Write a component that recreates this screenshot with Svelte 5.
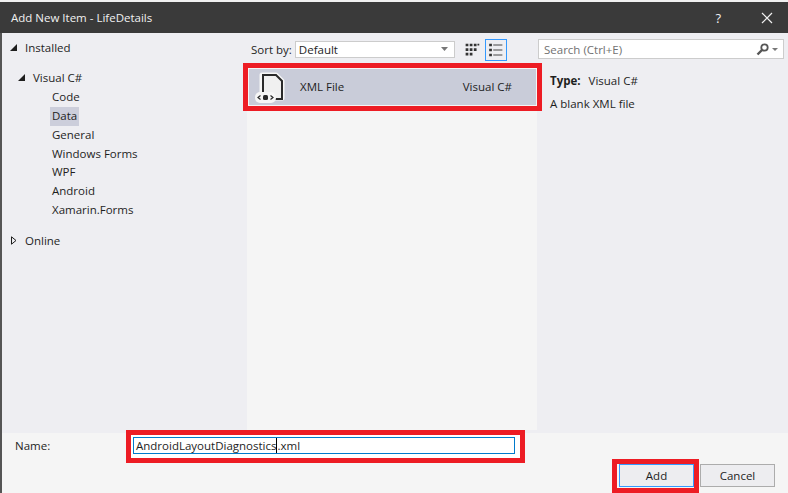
<script>
  const templates = ["Code", "Data", "General", "Windows Forms", "WPF", "Android", "Xamarin.Forms"];
</script>

<div class="dialog">
  <header class="titlebar">
    <span class="title">Add New Item - LifeDetails</span>
    <span class="help">?</span>
    <svg class="close" width="12" height="12" viewBox="0 0 12 12"><path d="M1 1l10 10M11 1L1 11" stroke="#f1f1f1" stroke-width="1.2" fill="none" /></svg>
  </header>

  <div class="body">
    <nav class="tree">
      <div class="node top">
        <svg class="arrow" width="7" height="7" viewBox="0 0 7 7"><path d="M7 0v7H0z" fill="#1e1e1e" /></svg>
        Installed
      </div>
      <div class="node lang">
        <svg class="arrow" width="7" height="7" viewBox="0 0 7 7"><path d="M7 0v7H0z" fill="#1e1e1e" /></svg>
        Visual C#
      </div>
      <ul>
        {#each templates as t}
          <li><span class:selected={t === "Data"}>{t}</span></li>
        {/each}
      </ul>
      <div class="node online">
        <svg class="arrow" width="6" height="9" viewBox="0 0 6 9"><path d="M.5.8v7.4L5 4.5z" fill="none" stroke="#1e1e1e" /></svg>
        Online
      </div>
    </nav>

    <main class="center">
      <div class="toolbar">
        <span>Sort by:</span>
        <div class="select">
          Default
          <svg width="7" height="4" viewBox="0 0 7 4"><path d="M0 0h7L3.500 4z" fill="#777" /></svg>
        </div>
        <svg class="view" width="22" height="22" viewBox="0 0 22 22">
          <path d="M4 4h3v3H4zM8.500 4h3v3h-3zM13 4h3v3h-3zM17 4h2v2h-2zM4 9h3v3H4zM8.500 9h3v3h-3zM13 9h3v3h-3zM4 14h3v3H4zM8.500 14h3v3h-3z" fill="#333" />
        </svg>
        <svg class="view active" width="22" height="22" viewBox="0 0 22 22">
          <path d="M3.500 4h3v3h-3zM3.500 9.500h3v3h-3zM3.500 15h3v3h-3z" fill="#333" />
          <path d="M8 5.500h10M8 11h10M8 16.500h10" stroke="#333" stroke-width="1" fill="none" />
        </svg>
      </div>
      <div class="list">
        <div class="item">
          <div class="item-inner">
            <svg class="file" width="32" height="34" viewBox="0 0 32 34">
              <path d="M8 5h14l6 6v17H8z" fill="#f6f6f6" stroke="#f6f6f6" stroke-width="5" stroke-linejoin="round" />
              <path d="M9 27V5h13l6 6v18H17" fill="#f0f0f0" stroke="#2a2a2a" stroke-width="2" />
              <rect x="1" y="22" width="21" height="11" rx="5" fill="#f6f6f6" />
              <path d="M6.500 25.500L4 27.500l2.500 2M16.500 25.500l2.500 2-2.500 2" fill="none" stroke="#2a2a2a" stroke-width="1.200" />
              <rect x="9" y="25" width="5" height="5" rx="1.500" fill="#2a2a2a" />
            </svg>
            <span class="item-name">XML File</span>
            <span class="item-lang">Visual C#</span>
          </div>
        </div>
      </div>
    </main>

    <aside class="details">
      <div class="search">
        <span>Search (Ctrl+E)</span>
        <svg width="13" height="13" viewBox="0 0 13 13">
          <circle cx="8.500" cy="4.500" r="3.200" fill="none" stroke="#555" stroke-width="1.800" />
          <path d="M6 7L1.500 11.500" stroke="#555" stroke-width="2.400" />
        </svg>
        <svg width="6" height="3" viewBox="0 0 6 3"><path d="M0 0h6L3 3z" fill="#777" /></svg>
      </div>
      <p class="type"><b>Type:</b><span>Visual C#</span></p>
      <p>A blank XML file</p>
    </aside>
  </div>

  <footer class="footer">
    <div class="name-row">
      <label for="name">Name:</label>
      <div class="name-mark">
        <div class="name-input" id="name">AndroidLayoutDiagnostics<i class="caret"></i>.xml</div>
      </div>
    </div>
    <div class="buttons">
      <div class="add-mark"><button class="btn add">Add</button></div>
      <button class="btn">Cancel</button>
    </div>
  </footer>
</div>

<style>
  :global(body) {
    margin: 0;
    background: #f0f0f0;
  }
  .dialog {
    width: 788px;
    height: 493px;
    box-sizing: border-box;
    padding-top: 2px;
    display: flex;
    flex-direction: column;
    font-family: "Open Sans", "Noto Sans", sans-serif;
    font-size: 11.500px;
    color: #1e1e1e;
    overflow: hidden;
  }
  .titlebar {
    height: 31px;
    flex: none;
    background: #3a3a3a;
    color: #f1f1f1;
    display: flex;
    align-items: center;
    padding: 0 15px 0 11px;
  }
  .title {
    flex: 1;
  }
  .help {
    font-size: 13px;
    margin-right: 40px;
  }
  .body {
    flex: 1;
    min-height: 0;
    display: flex;
    background: #eeeef2;
    border-left: 2px solid #555;
  }
  .tree {
    width: 245px;
    flex: none;
    padding-top: 5px;
    box-sizing: border-box;
  }
  .node {
    display: flex;
    align-items: center;
    height: 19px;
  }
  .arrow {
    margin-right: 8px;
  }
  .top {
    padding-left: 8px;
  }
  .lang {
    padding-left: 16px;
    margin-top: 11px;
  }
  ul {
    list-style: none;
    margin: 1px 0 0;
    padding: 0 0 0 48px;
  }
  li {
    height: 18.850px;
    line-height: 18.850px;
  }
  li span {
    display: inline-block;
    padding: 0 2px;
  }
  .selected {
    background: #ccceDB;
  }
  .online {
    padding-left: 9px;
    margin-top: 11px;
  }
  .center {
    width: 290px;
    flex: none;
    display: flex;
    flex-direction: column;
  }
  .toolbar {
    height: 30px;
    box-sizing: border-box;
    padding-top: 2px;
    flex: none;
    display: flex;
    align-items: center;
    padding-left: 4px;
  }
  .select {
    width: 160px;
    height: 17px;
    box-sizing: border-box;
    margin-left: 3px;
    margin-right: 6px;
    background: #fff;
    border: 1px solid #ccc;
    display: flex;
    align-items: center;
    justify-content: space-between;
    padding: 0 6px 0 3px;
  }
  .view {
    margin-right: 2px;
    margin-top: 2px;
    box-sizing: border-box;
    border: 1px solid transparent;
  }
  .view.active {
    border-color: #3399ff;
  }
  .list {
    flex: 1;
    background: #f5f5f5;
    margin-bottom: 3px;
  }
  .item {
    margin: 0 -5px 0 -4px;
    height: 48px;
    box-sizing: border-box;
    border: 5px solid #ed1c24;
  }
  .item-inner {
    height: 100%;
    box-sizing: border-box;
    border: 1px solid #f5f5f5;
    background: #c9ccd9;
    display: flex;
    align-items: center;
    padding: 0 24px 0 5px;
  }
  .item-name {
    margin-left: 14px;
    flex: 1;
    position: relative;
    top: -1px;
  }
  .item-lang {
    position: relative;
    top: -1px;
  }
  .details {
    flex: 1;
    padding: 6px 4px 0 1px;
  }
  .search {
    height: 20px;
    box-sizing: border-box;
    background: #fff;
    border: 1px solid #ccc;
    display: flex;
    align-items: center;
    gap: 3px;
    padding: 0 5px;
    color: #717171;
  }
  .search span {
    flex: 1;
  }
  .details p {
    margin: 0 0 0 12px;
    height: 23px;
    line-height: 23px;
  }
  .details .type {
    margin-top: 10px;
  }
  .type b {
    font-weight: 700;
    margin-right: 8px;
  }
  .footer {
    height: 60px;
    flex: none;
    background: #f5f5f5;
    border-left: 2px solid #555;
  }
  .name-row {
    display: flex;
    align-items: flex-start;
    margin-top: -3px;
    padding-left: 13px;
  }
  label {
    width: 111px;
    padding-top: 8px;
  }
  .name-mark {
    width: 399px;
    height: 33px;
    box-sizing: border-box;
    border: 5px solid #ed1c24;
    padding: 2px 5px 2px 2px;
    background: #fff;
  }
  .name-input {
    height: 17px;
    line-height: 15px;
    box-sizing: border-box;
    border: 1px solid #007acc;
    padding-left: 2px;
    background: #fff;
  }
  .caret {
    display: inline-block;
    width: 1px;
    height: 15px;
    background: #000;
    vertical-align: top;
  }
  .buttons {
    display: flex;
    justify-content: flex-end;
    align-items: flex-start;
    margin-top: -4px;
    padding-right: 13px;
    gap: 1px;
  }
  .add-mark {
    border: 5px solid #ed1c24;
    padding: 0 0 0 2px;
    height: 34px;
    box-sizing: border-box;
    background: #f5f5f5;
  }
  .btn {
    width: 75px;
    height: 23px;
    box-sizing: border-box;
    background: #ededf0;
    border: 1px solid #acacac;
    font: inherit;
    color: #1e1e1e;
    padding: 0;
    margin-top: 5px;
  }
  .btn.add {
    border-color: #3399ff;
    margin-top: 0;
  }
</style>
